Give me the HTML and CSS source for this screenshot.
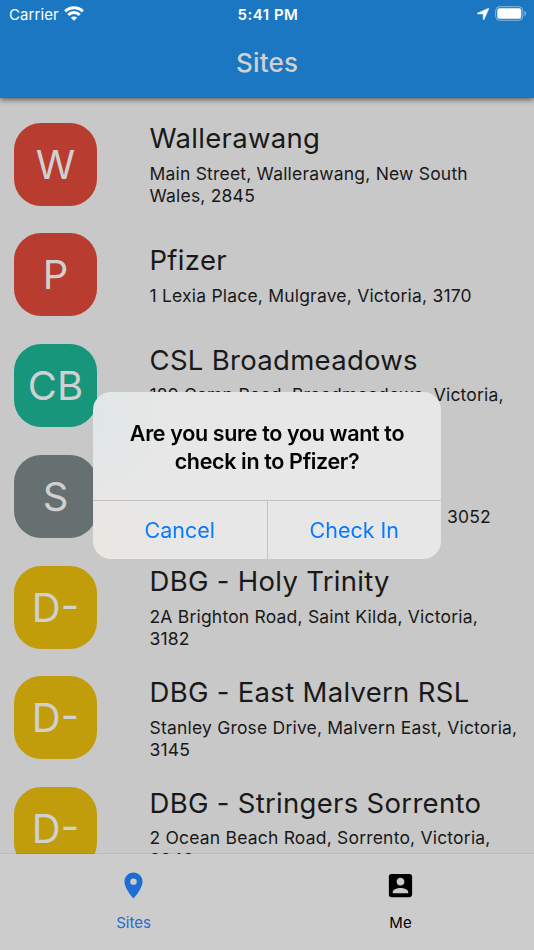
FILE: index.html
```html
<!DOCTYPE html>
<html lang="en">

<head>
  <meta charset="UTF-8">
  <meta name="viewport" content="width=device-width, initial-scale=1.0">
  <link rel="stylesheet" href="styles.css">
  <title>Sites</title>
</head>

<body>
  <header>
    <div class="status-bar">
      <div class="carrier">
        <span>Carrier</span>
        <svg class="wifi" viewBox="0 0 20 15" fill="none" stroke="#fff" stroke-width="3">
          <path d="M1.2 5.4a12.5 12.5 0 0 1 17.6 0"/>
          <path d="M4.3 9a8 8 0 0 1 11.4 0"/>
          <path d="M10 14.8l-3.1-3.1a4.4 4.4 0 0 1 6.2 0z" fill="#fff" stroke="none"/>
        </svg>
      </div>
      <time>5:41 PM</time>
      <div class="indicators">
        <svg class="location" viewBox="0 0 12 12" fill="#fff" stroke="#fff" stroke-width=".5"><path d="M11.2.4c.5-.2.7.1.5.6L7.1 11.4c-.3.5-.9.4-.9-.1V6.2a.3.3 0 0 0-.3-.3H.8c-.6 0-.7-.6-.1-.9z"/></svg>
        <svg class="battery" viewBox="0 0 32 15">
          <rect x=".7" y=".7" width="27.2" height="13.6" rx="4" fill="none" stroke="#8dbbe0"/>
          <rect x="2.3" y="2.3" width="24" height="10.4" rx="2.3" fill="#fff"/>
          <path d="M29.5 5v5c1-.4 1.6-1.4 1.6-2.5S30.5 5.4 29.5 5z" fill="#8dbbe0"/>
        </svg>
      </div>
    </div>
    <h1>Sites</h1>
  </header>

  <main>
    <ul class="sites">
      <li>
        <div class="avatar red">W</div>
        <div class="info">
          <h2>Wallerawang</h2>
          <p>Main Street, Wallerawang, New South Wales, 2845</p>
        </div>
      </li>
      <li>
        <div class="avatar red">P</div>
        <div class="info">
          <h2>Pfizer</h2>
          <p>1 Lexia Place, Mulgrave, Victoria, 3170</p>
        </div>
      </li>
      <li>
        <div class="avatar green">CB</div>
        <div class="info">
          <h2>CSL Broadmeadows</h2>
          <p>189 Camp Road, Broadmeadows, Victoria, 3047</p>
        </div>
      </li>
      <li>
        <div class="avatar grey">S</div>
        <div class="info">
          <h2>Seqirus</h2>
          <p>63 Poplar Road, Parkville, Victoria, 3052</p>
        </div>
      </li>
      <li>
        <div class="avatar yellow">D-</div>
        <div class="info">
          <h2>DBG - Holy Trinity</h2>
          <p>2A Brighton Road, Saint Kilda, Victoria, 3182</p>
        </div>
      </li>
      <li>
        <div class="avatar yellow">D-</div>
        <div class="info">
          <h2>DBG - East Malvern RSL</h2>
          <p>Stanley Grose Drive, Malvern East, Victoria, 3145</p>
        </div>
      </li>
      <li>
        <div class="avatar yellow">D-</div>
        <div class="info">
          <h2>DBG - Stringers Sorrento</h2>
          <p>2 Ocean Beach Road, Sorrento, Victoria, 3943</p>
        </div>
      </li>
    </ul>
  </main>

  <nav>
    <a class="tab active">
      <svg viewBox="0 0 24 24" fill="currentColor"><path d="M12 2C8.13 2 5 5.13 5 9c0 5.25 7 13 7 13s7-7.75 7-13c0-3.87-3.13-7-7-7zm0 9.5a2.5 2.5 0 0 1 0-5 2.5 2.5 0 0 1 0 5z"/></svg>
      <span>Sites</span>
    </a>
    <a class="tab">
      <svg viewBox="0 0 24 24" fill="currentColor"><path d="M3 5v14a2 2 0 0 0 2 2h14c1.1 0 2-.9 2-2V5c0-1.1-.9-2-2-2H5a2 2 0 0 0-2 2zm12 4c0 1.66-1.34 3-3 3s-3-1.34-3-3 1.34-3 3-3 3 1.34 3 3zm-9 8c0-2 4-3.1 6-3.1s6 1.1 6 3.1v1H6v-1z"/></svg>
      <span>Me</span>
    </a>
  </nav>

  <div class="overlay">
    <div class="dialog" role="alertdialog">
      <p class="message">Are you sure to you want to check in to Pfizer?</p>
      <div class="actions">
        <button>Cancel</button>
        <button>Check In</button>
      </div>
    </div>
  </div>
</body>

</html>
```
FILE: styles.css
```css
* {
  box-sizing: border-box;
}

body {
  display: flex;
  flex-direction: column;
  height: 100vh;
  margin: 0;
  overflow: hidden;
  font-family: Inter, Roboto, "Liberation Sans", sans-serif;
  color: #191919;
  background: #c8c8c8;
}

h1,
h2,
p,
ul {
  margin: 0;
  padding: 0;
}

header {
  position: relative;
  z-index: 1;
  flex: none;
  height: 98px;
  background: #1b77c2;
  box-shadow: 0 2px 5px rgba(0, 0, 0, .5);
}

.status-bar {
  display: grid;
  grid-template-columns: 1fr auto 1fr;
  align-items: center;
  height: 28px;
  padding: 0 7px 0 9px;
  font-size: 15px;
  color: #fff;
}

.carrier,
.indicators {
  display: flex;
  align-items: center;
}

.carrier {
  gap: 5px;
  letter-spacing: .1px;
}

.indicators {
  justify-content: flex-end;
  gap: 6px;
}

.status-bar time {
  font-weight: 600;
  letter-spacing: .5px;
}

.wifi {
  width: 20px;
  height: 15px;
  margin-top: -2px;
}

.location {
  width: 12px;
  height: 12px;
}

.battery {
  width: 32px;
  height: 15px;
  margin-top: -1px;
}

h1 {
  font-size: 26px;
  font-weight: 500;
  line-height: 69px;
  text-align: center;
  letter-spacing: .2px;
  color: #d1d1d1;
}

main {
  flex: 1;
  min-height: 0;
  overflow: hidden;
  padding-top: 10.8px;
}

.sites {
  list-style: none;
}

.sites li {
  display: flex;
  align-items: center;
  gap: 52.5px;
  height: 110.75px;
  padding: 0 14px;
}

.avatar {
  display: flex;
  flex: none;
  align-items: center;
  justify-content: center;
  width: 83px;
  height: 83px;
  border-radius: 27px;
  font-size: 40px;
  font-weight: 400;
  color: #d0d0d0;
}

.red {
  background: #b93c30;
}

.green {
  background: #17967c;
}

.grey {
  background: #667070;
}

.yellow {
  background: #c19d0c;
}

.info {
  flex: 1;
  min-width: 0;
}

.info h2 {
  font-size: 27.5px;
  font-weight: 400;
  line-height: 35px;
  letter-spacing: .3px;
  white-space: nowrap;
}

.info p {
  margin-top: 6.5px;
  font-size: 17.5px;
  line-height: 22px;
  letter-spacing: .2px;
}

nav {
  display: flex;
  flex: none;
  height: 96px;
  background: #ccc;
  box-shadow: 0 -1px 1px rgba(0, 0, 0, .06);
  z-index: 1;
}

.tab {
  display: flex;
  flex: 1;
  flex-direction: column;
  align-items: center;
  padding-top: 16px;
  font-size: 15px;
  line-height: 20px;
  color: #000;
}

.tab svg {
  width: 31px;
  height: 31px;
  margin-bottom: 12px;
}

.tab.active {
  color: #1d6dd3;
}

.overlay {
  position: fixed;
  inset: 0;
  z-index: 2;
  display: flex;
  align-items: center;
  justify-content: center;
}

.dialog {
  width: 348px;
  border-radius: 18px;
  overflow: hidden;
  background:
    radial-gradient(circle at 0 18%, #e0e7e6, transparent 80px),
    radial-gradient(circle at 0 100%, #e9e7e0, transparent 80px),
    #e7e7e7;
}

.message {
  padding: 27px 30px 24px;
  font-size: 21.5px;
  font-weight: 600;
  line-height: 28.5px;
  text-align: center;
  letter-spacing: -.35px;
  color: #000;
}

.actions {
  display: flex;
  height: 59px;
  border-top: 1px solid #c4c4c4;
}

.actions button {
  flex: 1;
  border: 0;
  padding: 0;
  background: none;
  font: inherit;
  font-size: 21.5px;
  color: #087aff;
}

.actions button + button {
  border-left: 1px solid #c4c4c4;
}
```
